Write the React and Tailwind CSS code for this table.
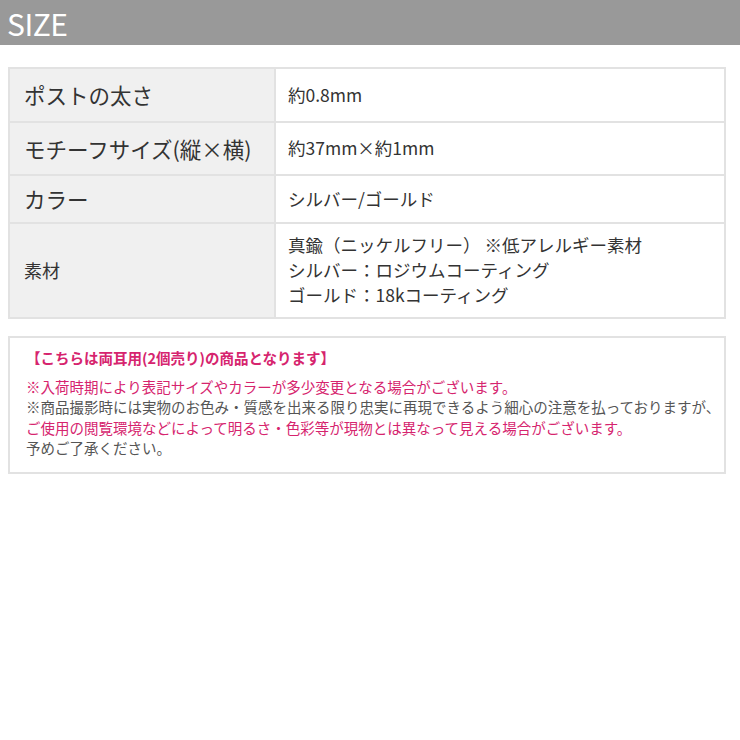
const rows = [
  { label: 'ポストの太さ', value: ['約0.8mm'], h: 'h-[54px]', big: true },
  { label: 'モチーフサイズ(縦×横)', value: ['約37mm×約1mm'], h: 'h-[53px]', big: true },
  { label: 'カラー', value: ['シルバー/ゴールド'], h: 'h-[48px]', big: true },
  {
    label: '素材',
    value: ['真鍮（ニッケルフリー） ※低アレルギー素材', 'シルバー：ロジウムコーティング', 'ゴールド：18kコーティング'],
    h: 'h-[95px]',
    big: false,
  },
];

export default function App() {
  return (
    <div
      className="w-[740px] h-[740px] bg-white text-[#333]"
      style={{ fontFamily: '"Noto Sans CJK JP", "Open Sans", sans-serif' }}
    >
      {/* Header */}
      <div className="h-[45px] bg-[#999999] flex items-center px-[7px]">
        <span className="text-white text-[30px] leading-[1.2] tracking-[-0.5px]">SIZE</span>
      </div>

      {/* Spec table */}
      <div className="px-[8px] pt-[22px] pr-[14px]">
        <table className="w-full border-collapse">
          <tbody>
            {rows.map((row) => (
              <tr key={row.label} className={row.h}>
                <td
                  className={`w-[266px] bg-[#f0f0f0] border-2 border-[#e2e2e2] pl-[14px] leading-[1.2] ${
                    row.big ? 'text-[21.5px]' : 'text-[18px]'
                  }`}
                >
                  {row.label}
                </td>
                <td className="border-2 border-[#e2e2e2] pl-[12px] text-[17.5px] leading-[25px] pb-[2px]">
                  {row.value.map((v) => (
                    <div key={v}>{v}</div>
                  ))}
                </td>
              </tr>
            ))}
          </tbody>
        </table>
      </div>

      {/* Notes */}
      <div className="mx-[8px] mr-[14px] mt-[17px] border-2 border-[#e2e2e2] h-[138px] px-[16px] pt-[10px] text-[14.5px] leading-[20.5px] text-[#555] whitespace-nowrap">
        <div className="text-[#d6246e] font-bold mb-[8px]">【こちらは両耳用(2個売り)の商品となります】</div>
        <div className="text-[#d6246e]">※入荷時期により表記サイズやカラーが多少変更となる場合がございます。</div>
        <div>※商品撮影時には実物のお色み・質感を出来る限り忠実に再現できるよう細心の注意を払っておりますが、</div>
        <div className="text-[#d6246e]">ご使用の閲覧環境などによって明るさ・色彩等が現物とは異なって見える場合がございます。</div>
        <div>予めご了承ください。</div>
      </div>
    </div>
  );
}
